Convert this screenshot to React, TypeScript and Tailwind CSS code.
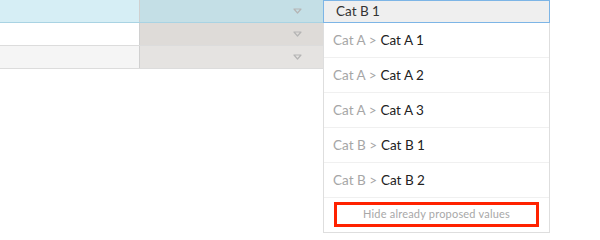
const rows = [
  { left: "bg-[#d6eef5]", right: "bg-[#c4dfe6]", border: "border-[#a9d3e3]" },
  { left: "bg-white", right: "bg-[#dedbd8]", border: "border-[#dcdcdc]" },
  { left: "bg-[#f5f5f5]", right: "bg-[#e5e3e1]", border: "border-[#dcdcdc]" },
];

const options = [
  { parent: "Cat A", label: "Cat A 1" },
  { parent: "Cat A", label: "Cat A 2" },
  { parent: "Cat A", label: "Cat A 3" },
  { parent: "Cat B", label: "Cat B 1" },
  { parent: "Cat B", label: "Cat B 2" },
];

function Caret() {
  return (
    <svg width="9" height="6" viewBox="0 0 9 6" className="text-[#b5b5b5]">
      <path d="M1 1 L8 1 L4.5 5 Z" fill="none" stroke="currentColor" strokeWidth="1.2" strokeLinejoin="round" />
    </svg>
  );
}

export default function App() {
  return (
    <div className="w-[600px] h-[240px] bg-white overflow-hidden flex font-['Lato',sans-serif]">
      <div className="w-[323px] shrink-0 flex flex-col">
        {rows.map((r, i) => (
          <div key={i} className={`flex h-[23px] border-b ${r.border}`}>
            <div className={`w-[140px] border-r border-[#d0d0d0] ${r.left}`} />
            <div className={`flex-1 flex items-center justify-end pr-[21px] ${r.right}`}>
              <Caret />
            </div>
          </div>
        ))}
      </div>
      <div className="w-[227px] shrink-0 flex flex-col h-[233px]">
        <div className="h-[23px] border border-[#7db5e6] bg-[#efefef] flex items-center pl-[12px] text-[13.5px] text-[#333]">
          Cat B 1
        </div>
        <div className="flex-1 border-x border-b border-[#dedede] flex flex-col">
          {options.map((o, i) => (
            <div
              key={i}
              className="h-[35px] border-b border-[#f0f0f0] flex items-center pl-[9px] text-[13.5px] shrink-0"
            >
              <span className="text-[#a6a6a6]">{o.parent} &gt;</span>
              <span className="text-[#222] ml-[4px]">{o.label}</span>
            </div>
          ))}
          <div className="flex-1 flex items-start px-[10px] pt-[4px]">
            <div className="w-full h-[25px] border-[3px] border-[#ff2200] flex items-center justify-center text-[11px] text-[#a8a8a8] tracking-[0.2px]">
              Hide already proposed values
            </div>
          </div>
        </div>
      </div>
    </div>
  );
}
